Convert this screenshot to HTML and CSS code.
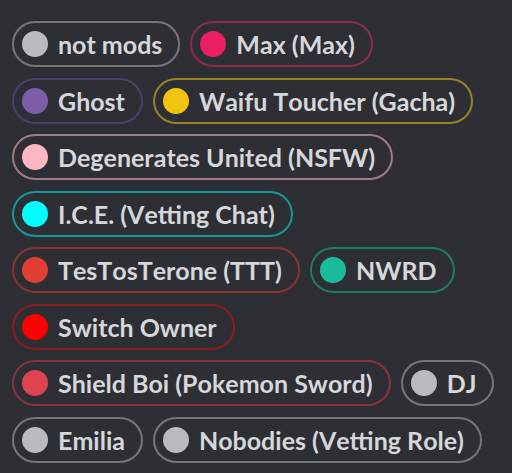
FILE: index.html
```html
<!DOCTYPE html>
<html lang="en">
<head>
    <meta charset="UTF-8">
    <title>Roles</title>
    <link rel="stylesheet" href="styles.css">
</head>
<body>
    <ul class="roles">
        <li class="role role-gray"><span class="dot"></span>not mods</li>
        <li class="role role-max"><span class="dot"></span>Max (Max)</li>
        <li class="role role-ghost"><span class="dot"></span>Ghost</li>
        <li class="role role-waifu"><span class="dot"></span>Waifu Toucher (Gacha)</li>
        <li class="role role-degen"><span class="dot"></span>Degenerates United (NSFW)</li>
        <li class="role role-ice"><span class="dot"></span>I.C.E. (Vetting Chat)</li>
        <li class="role role-ttt"><span class="dot"></span>TesTosTerone (TTT)</li>
        <li class="role role-nwrd"><span class="dot"></span>NWRD</li>
        <li class="role role-switch"><span class="dot"></span>Switch Owner</li>
        <li class="role role-shield"><span class="dot"></span>Shield Boi (Pokemon Sword)</li>
        <li class="role role-gray"><span class="dot"></span>DJ</li>
        <li class="role role-gray"><span class="dot"></span>Emilia</li>
        <li class="role role-gray"><span class="dot"></span>Nobodies (Vetting Role)</li>
    </ul>
</body>
</html>
```

FILE: styles.css
```css
html, body {
    margin: 0;
    background-color: #2e2f34;
}
body {
    font-family: Lato, sans-serif;
    width: 512px;
    height: 473px;
    overflow: hidden;
}
.roles {
    list-style: none;
    margin: 0;
    padding: 21px 10px 0 12px;
    display: flex;
    flex-wrap: wrap;
    gap: 10.5px 10px;
}
.role {
    box-sizing: border-box;
    height: 46px;
    display: flex;
    align-items: center;
    padding: 0 16px 0 8px;
    border: 2px solid #75767b;
    border-radius: 23px;
    color: #d6d7da;
    font-size: 25px;
    font-weight: 700;
    font-kerning: none;
    white-space: nowrap;
}
.dot {
    width: 26px;
    height: 26px;
    border-radius: 50%;
    margin-right: 10px;
    background-color: #b9bbbe;
}
.role-max { border-color: #8c2a52; }
.role-max .dot { background-color: #e91e63; }
.role-ghost { border-color: #4c3f6b; }
.role-ghost .dot { background-color: #7b5ea7; }
.role-waifu { border-color: #9a8323; }
.role-waifu .dot { background-color: #f1c40f; }
.role-degen { border-color: #a07a82; }
.role-degen .dot { background-color: #ffb6c1; }
.role-ice { border-color: #17979a; }
.role-ice .dot { background-color: #00ffff; }
.role-ttt { border-color: #8a3431; }
.role-ttt .dot { background-color: #e03e30; }
.role-nwrd { border-color: #1f7a66; }
.role-nwrd .dot { background-color: #1abc9c; }
.role-switch { border-color: #8b1c1f; }
.role-switch .dot { background-color: #ff0000; }
.role-shield { border-color: #8a3339; }
.role-shield .dot { background-color: #de4350; }
```
